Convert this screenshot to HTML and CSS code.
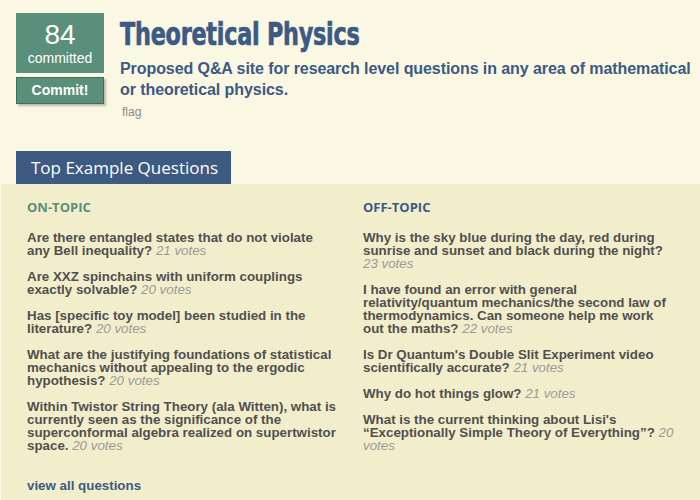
FILE: index.html
```html
<!DOCTYPE html>
<html>
<head>
<meta charset="utf-8">
<link rel="stylesheet" href="styles.css">
</head>
<body>
<div class="header">
  <div class="commit-col">
    <div class="count">
      <div class="count-num">84</div>
      <div class="count-label">committed</div>
    </div>
    <div class="commit-btn">Commit!</div>
  </div>
  <div class="info">
    <h1 class="title"><span class="title-text">Theoretical Physics</span></h1>
    <p class="desc">Proposed Q&amp;A site for research level questions in any area of mathematical or theoretical physics.</p>
    <div class="flag">flag</div>
  </div>
</div>

<div class="tab">Top Example Questions</div>
<div class="panel">
  <div class="cols">
    <div class="col">
      <h2 class="col-head on">ON-TOPIC</h2>
      <ul class="qlist">
        <li>Are there entangled states that do not violate any Bell inequality? <span class="votes">21 votes</span></li>
        <li>Are XXZ spinchains with uniform couplings exactly solvable? <span class="votes">20 votes</span></li>
        <li>Has [specific toy model] been studied in the literature? <span class="votes">20 votes</span></li>
        <li>What are the justifying foundations of statistical mechanics without appealing to the ergodic hypothesis? <span class="votes">20 votes</span></li>
        <li>Within Twistor String Theory (ala Witten), what is currently seen as the significance of the superconformal algebra realized on supertwistor space. <span class="votes">20 votes</span></li>
      </ul>
    </div>
    <div class="col">
      <h2 class="col-head off">OFF-TOPIC</h2>
      <ul class="qlist">
        <li>Why is the sky blue during the day, red during sunrise and sunset and black during the night? <span class="votes">23 votes</span></li>
        <li>I have found an error with general relativity/quantum mechanics/the second law of thermodynamics. Can someone help me work out the maths? <span class="votes">22 votes</span></li>
        <li>Is Dr Quantum's Double Slit Experiment video scientifically accurate? <span class="votes">21 votes</span></li>
        <li>Why do hot things glow? <span class="votes">21 votes</span></li>
        <li>What is the current thinking about Lisi's “Exceptionally Simple Theory of Everything”? <span class="votes">20 votes</span></li>
      </ul>
    </div>
  </div>
  <a class="view-all" href="#">view all questions</a>
</div>
</body>
</html>
```

FILE: styles.css
```css
html, body {
  margin: 0;
  padding: 0;
  background: #faf8e2;
  font-family: "Liberation Sans", Arial, sans-serif;
}

.header {
  display: flex;
  gap: 16px;
  padding: 13px 0 0 16px;
}

.commit-col {
  width: 88px;
  flex: none;
}

.count {
  height: 60px;
  background: #5a8f7b;
  color: #fff;
  text-align: center;
  box-sizing: border-box;
  padding-top: 7px;
}

.count-num {
  font-size: 28px;
  line-height: 30px;
}

.count-label {
  font-size: 14px;
  line-height: 16px;
  margin-top: 0;
}

.commit-btn {
  margin-top: 4px;
  height: 27px;
  box-sizing: border-box;
  background: #5a8f7b;
  border: 1px solid #3d6e5b;
  box-shadow: 2px 2px 2px rgba(0, 0, 0, 0.25);
  color: #fff;
  font-weight: bold;
  font-size: 14px;
  line-height: 25px;
  text-align: center;
}

.info {
  flex: 1;
  color: #3b5a85;
}

.title {
  margin: 1px 0 0 0;
  height: 40px;
  font-family: "DejaVu Sans Condensed", "DejaVu Sans", sans-serif;
  font-weight: bold;
  font-size: 32px;
  line-height: 40px;
  color: #3b5a85;
  white-space: nowrap;
}

.title-text {
  display: inline-block;
  transform: scaleX(0.775);
  transform-origin: left center;
  -webkit-text-stroke: 0.7px #3b5a85;
  letter-spacing: -0.3px;
}

.desc {
  margin: 4px 0 0 0;
  font-weight: bold;
  font-size: 16px;
  line-height: 21px;
  letter-spacing: -0.08px;
}

.flag {
  margin: 5px 0 0 2px;
  font-size: 12px;
  color: #8a8a8a;
}

.tab {
  margin: 32px 0 0 16px;
  width: 215px;
  height: 33px;
  box-sizing: border-box;
  background: #3c5a82;
  color: #fff;
  font-family: "Open Sans", sans-serif;
  font-size: 17px;
  line-height: 33px;
  padding-left: 15px;
}

.panel {
  margin-left: 1px;
  background: #f2eecc;
  padding: 15px 0 20px 26px;
}

.cols {
  display: grid;
  grid-template-columns: 312px 312px;
  column-gap: 24px;
}

.col-head {
  margin: 0;
  font-family: "Open Sans", sans-serif;
  font-weight: bold;
  font-size: 13px;
  line-height: 16px;
}

.col-head.on { color: #5a8f7b; }
.col-head.off { color: #3b5a85; }

.qlist {
  list-style: none;
  margin: 16px 0 0 0;
  padding: 0;
}

.qlist li {
  font-weight: bold;
  font-size: 13.33px;
  line-height: 13px;
  color: #505050;
  margin-bottom: 13px;
}

.votes {
  font-weight: normal;
  font-style: italic;
  color: #9a9a9a;
}

.view-all {
  display: block;
  margin-top: 14px;
  font-weight: bold;
  font-size: 13.33px;
  line-height: 14px;
  color: #3b5a85;
  text-decoration: none;
}
```
